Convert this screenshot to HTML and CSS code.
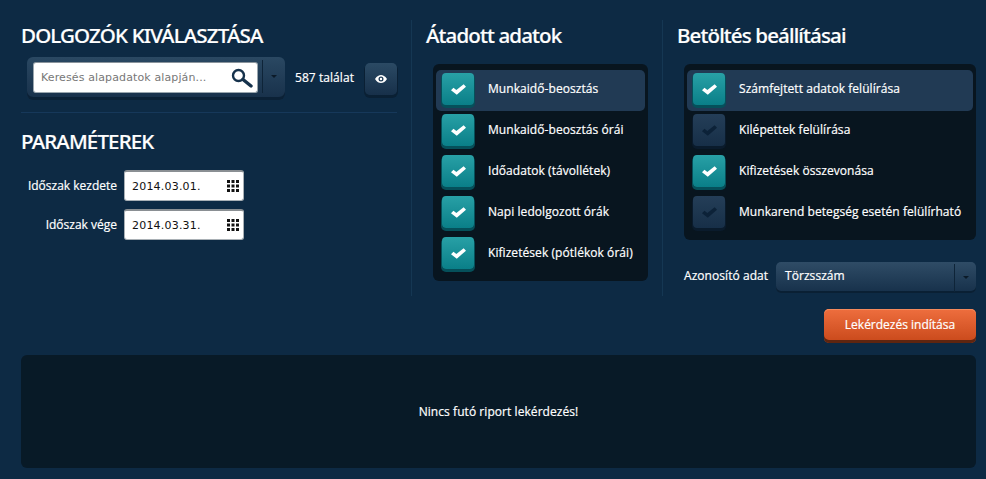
FILE: index.html
```html
<!DOCTYPE html>
<html lang="hu">
<head>
<meta charset="utf-8">
<title>Riport</title>
<link rel="stylesheet" href="styles.css">
</head>
<body>
<svg class="defs" width="0" height="0" aria-hidden="true">
  <symbol id="check" viewBox="0 0 14 10"><path d="M0 5.600 L2.300 3.400 L5 5.400 L11.800 0 L14 2.400 L5.400 9.800 Z" fill="currentColor"/></symbol>
  <symbol id="cal" viewBox="0 0 12 12"><path d="M0 0h3v3H0zM4.500 0h3v3h-3zM9 0h3v3H9zM0 4.500h3v3H0zM4.500 4.500h3v3h-3zM9 4.500h3v3H9zM0 9h3v3H0zM4.500 9h3v3h-3zM9 9h3v3H9z" fill="#111"/></symbol>
</svg>
<main class="page">
  <div class="top">
    <section class="col col-a">
      <h2 class="title upper">DOLGOZÓK KIVÁLASZTÁSA</h2>
      <div class="search-row">
        <div class="search-group">
          <div class="search-input">
            <span class="placeholder">Keresés alapadatok alapján...</span>
            <svg class="mag" width="22" height="20" viewBox="0 0 22 20"><circle cx="7.500" cy="7.500" r="5.500" fill="none" stroke="#16324c" stroke-width="2.400"/><path d="M12 11.500 L20 18" stroke="#16324c" stroke-width="3.400" stroke-linecap="round"/></svg>
          </div>
          <div class="caret-box"><span class="caret"></span></div>
        </div>
        <span class="count">587 találat</span>
        <button class="eye-btn" aria-label="Megtekintés">
          <svg width="12" height="8" viewBox="0 0 12 8"><path fill-rule="evenodd" d="M0 4 C2 1 4 0 6 0 S10 1 12 4 C10 7 8 8 6 8 S2 7 0 4 Z M6 1.500 A2.500 2.500 0 1 0 6 6.500 A2.500 2.500 0 1 0 6 1.500 Z M6 2.800 A1.200 1.200 0 1 1 6 5.200 A1.200 1.200 0 1 1 6 2.800 Z" fill="#fff"/></svg>
        </button>
      </div>
      <hr class="rule">
      <h2 class="title upper second">PARAMÉTEREK</h2>
      <div class="field">
        <label class="field-label">Időszak kezdete</label>
        <div class="date"><span>2014.03.01.</span><svg width="12" height="12"><use href="#cal"/></svg></div>
      </div>
      <div class="field">
        <label class="field-label">Időszak vége</label>
        <div class="date"><span>2014.03.31.</span><svg width="12" height="12"><use href="#cal"/></svg></div>
      </div>
    </section>
    <section class="col col-b">
      <h2 class="title">Átadott adatok</h2>
      <ul class="list list-b">
        <li class="item active"><span class="box on"><svg width="15" height="11"><use href="#check"/></svg></span>Munkaidő-beosztás</li>
        <li class="item"><span class="box on"><svg width="15" height="11"><use href="#check"/></svg></span>Munkaidő-beosztás órái</li>
        <li class="item"><span class="box on"><svg width="15" height="11"><use href="#check"/></svg></span>Időadatok (távollétek)</li>
        <li class="item"><span class="box on"><svg width="15" height="11"><use href="#check"/></svg></span>Napi ledolgozott órák</li>
        <li class="item"><span class="box on"><svg width="15" height="11"><use href="#check"/></svg></span>Kifizetések (pótlékok órái)</li>
      </ul>
    </section>
    <section class="col col-c">
      <h2 class="title">Betöltés beállításai</h2>
      <ul class="list list-c">
        <li class="item active"><span class="box on"><svg width="15" height="11"><use href="#check"/></svg></span>Számfejtett adatok felülírása</li>
        <li class="item"><span class="box off"><svg width="15" height="11"><use href="#check"/></svg></span>Kilépettek felülírása</li>
        <li class="item"><span class="box on"><svg width="15" height="11"><use href="#check"/></svg></span>Kifizetések összevonása</li>
        <li class="item"><span class="box off"><svg width="15" height="11"><use href="#check"/></svg></span>Munkarend betegség esetén felülírható</li>
      </ul>
      <div class="id-row">
        <span class="id-label">Azonosító adat</span>
        <div class="select"><span class="select-text">Törzsszám</span><div class="select-caret"><span class="caret"></span></div></div>
      </div>
    </section>
  </div>
  <div class="actions"><button class="run">Lekérdezés indítása</button></div>
  <div class="status">Nincs futó riport lekérdezés!</div>
</main>
</body>
</html>
```
FILE: styles.css
```css
* { box-sizing: border-box; }
html, body { margin: 0; height: 100%; }
body {
  background: #0d2a44;
  color: #fff;
  font-family: "Open Sans", "Noto Sans", sans-serif;
  font-size: 12px;
  letter-spacing: 0.06px;
  -webkit-text-stroke: 0.2px #fff;
  overflow: hidden;
}
.defs { position: absolute; }
.page { padding: 20px 10px 0 21px; width: 986px; }
.top { display: flex; height: 276px; }
.col { height: 276px; }
.col-a { width: 376px; }
.col-b { width: 251px; margin-left: 14px; padding-left: 14px; border-left: 1px solid #153753; }
.col-c { width: 314px; padding-left: 14px; border-left: 1px solid #153753; }
.title {
  margin: 0;
  font-family: "Noto Sans", sans-serif;
  font-weight: 500;
  font-size: 20.500px;
  line-height: 30px;
  letter-spacing: -0.85px;
  color: #fff;
}
.search-row { display: flex; align-items: flex-start; margin-top: 7px; padding-left: 6px; }
.search-group {
  display: flex;
  width: 258px;
  height: 43px;
  border-radius: 6px;
  background: linear-gradient(#2a4862, #17304a);
  box-shadow: inset 0 -3px 0 #0b2136;
  padding: 5px 0 0 6px;
}
.search-input {
  width: 225px;
  height: 31px;
  background: #fff;
  border: 1px solid #9aa6ae;
  border-top-color: #8a949c;
  border-radius: 3px;
  display: flex;
  align-items: center;
  justify-content: space-between;
  padding: 0 4px 0 7px;
}
.placeholder { font-family: "DejaVu Sans", sans-serif; font-size: 11px; color: #777; letter-spacing: 0.12px; -webkit-text-stroke: 0; }
.mag { flex: none; }
.caret-box { margin-left: 4px; width: 23px; height: 33px; margin-top: -2px; border-left: 1px solid #0e2438; display: flex; align-items: center; justify-content: center; }
.caret { width: 0; height: 0; border-left: 3px solid transparent; border-right: 3px solid transparent; border-top: 3px solid #0b1a28; }
.count { margin: 13px 0 0 10px; font-size: 12px; line-height: 16px; width: 70px; white-space: nowrap; }
.eye-btn {
  width: 32px;
  height: 32px;
  margin-top: 6px;
  padding: 0;
  border: 0;
  border-radius: 5px;
  background: linear-gradient(#2b4a64, #17304a);
  box-shadow: 0 2px 0 1px #0a2034;
  display: flex;
  align-items: center;
  justify-content: center;
}
.rule { border: 0; height: 1px; background: #16385a; margin: 12px 0 0; }
.second { margin-top: 13px; }
.field { display: flex; align-items: center; height: 31px; margin-bottom: 8px; }
.second + .field { margin-top: 14px; }
.field-label { width: 96px; text-align: right; font-size: 12px; color: #fff; padding-bottom: 1px; letter-spacing: 0; }
.date {
  margin-left: 7px;
  width: 120px;
  height: 31px;
  background: #fff;
  border: 1px solid #a9b0b5;
  border-top: 2px solid #8a8f93;
  border-radius: 3px;
  color: #111;
  display: flex;
  align-items: center;
  justify-content: space-between;
  padding: 0 4px 0 7px;
  font-family: "DejaVu Sans", sans-serif;
  font-size: 11px;
  letter-spacing: 0.2px;
  -webkit-text-stroke: 0;
}
.list {
  list-style: none;
  margin: 14px 0 0;
  padding: 6px 3px;
  background: #08151f;
  border-radius: 6px;
}
.list-b { margin-left: 7px; width: 215px; }
.list-c { margin-left: 7px; width: 292px; }
.item {
  height: 41px;
  border-radius: 5px;
  display: flex;
  align-items: center;
  font-size: 12px;
  color: #fff;
  padding: 0 6px 4px;
  white-space: nowrap;
}
.item.active { background: #213a54; }
.box {
  flex: none;
  width: 32px;
  height: 32px;
  margin: 0 14px -1px 0;
  border-radius: 4px;
  display: flex;
  align-items: center;
  justify-content: center;
}
.box.on { color: #fff; background: linear-gradient(#28a0a6, #0a7f88); box-shadow: 0 2px 0 1px #05505a; }
.box.off { color: #0c2238; background: linear-gradient(#243e58, #172f48); box-shadow: 0 2px 0 1px #0a1b2c; }
.id-row { display: flex; align-items: flex-start; margin: 22px 0 0 7px; }
.id-label { width: 92px; font-size: 12px; line-height: 16px; margin-top: 6px; white-space: nowrap; }
.select {
  width: 200px;
  height: 31px;
  border-radius: 5px;
  background: linear-gradient(#2f4c66, #16304a);
  box-shadow: inset 0 -2px 0 #0a2034;
  display: flex;
  align-items: center;
  justify-content: space-between;
}
.select-text { padding-left: 9px; font-size: 12px; padding-bottom: 5px; }
.select-caret { width: 22px; height: 28px; border-left: 1px solid #0e2438; display: flex; align-items: center; justify-content: center; }
.actions { display: flex; justify-content: flex-end; margin-top: 13px; }
.run {
  width: 152px;
  height: 34px;
  padding: 0 0 3px;
  border: 0;
  border-radius: 5px;
  background: linear-gradient(#ee6e3e, #c8481a);
  box-shadow: inset 0 -3px 0 #5e2510, inset 0 1px 0 #f58a5c;
  color: #fff;
  font-family: "Open Sans", sans-serif;
  font-size: 12px;
}
.status {
  margin-top: 12px;
  height: 113px;
  background: #081a27;
  border-radius: 6px;
  display: flex;
  align-items: center;
  justify-content: center;
  font-size: 12px;
}
```
